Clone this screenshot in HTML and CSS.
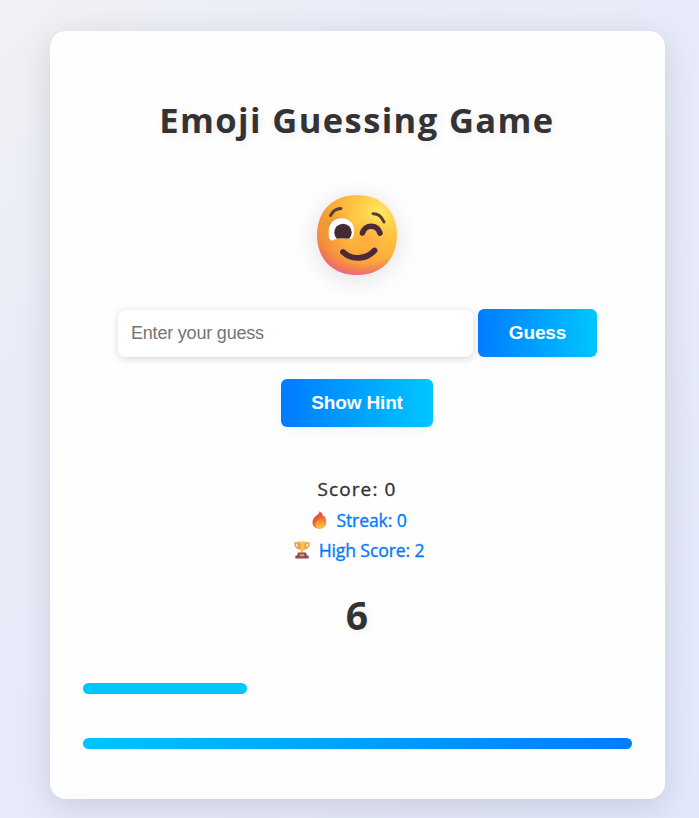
FILE: index.html
```html
<!DOCTYPE html>
<html lang="en">
<head>
<meta charset="utf-8">
<title>Emoji Guessing Game</title>
<link rel="stylesheet" href="styles.css">
</head>
<body>
<main class="card">
  <h1 class="title">Emoji Guessing Game</h1>
  <svg class="emoji" viewBox="0 0 80 80" role="img" aria-label="Winking face">
    <defs>
      <radialGradient id="face" cx="62" cy="18" r="72" gradientUnits="userSpaceOnUse">
        <stop offset="0" stop-color="#ffe965"/><stop offset=".25" stop-color="#ffcf49"/><stop offset=".6" stop-color="#fdb13a"/><stop offset="1" stop-color="#f07f3e"/>
      </radialGradient>
      <radialGradient id="cheek" cx="52" cy="45" r="24" gradientUnits="userSpaceOnUse">
        <stop offset="0" stop-color="#ff9a40" stop-opacity=".6"/><stop offset="1" stop-color="#ffa63f" stop-opacity="0"/>
      </radialGradient>
      <radialGradient id="chin" cx="46" cy="14" r="70" gradientUnits="userSpaceOnUse">
        <stop offset=".78" stop-color="#ee6d5c" stop-opacity="0"/><stop offset="1" stop-color="#e85aae"/>
      </radialGradient>
      <radialGradient id="brow" cx="18" cy="30" r="18" gradientUnits="userSpaceOnUse">
        <stop offset="0" stop-color="#c88a18" stop-opacity=".65"/><stop offset="1" stop-color="#e6a526" stop-opacity="0"/>
      </radialGradient>
      <clipPath id="eye"><path d="M12.500 44C9.500 31 15 23.300 24.500 23.300C34 23.300 38.500 31 36.800 39Q36 44.500 33 43.800Q24 42.800 19 43.800Q15 47 12.500 44Z"/></clipPath>
    </defs>
    <path fill="url(#face)" d="M40 0C63.500 0 80 15.500 80 40C80 64.500 63.500 80 40 80C16.500 80 0 64.500 0 40C0 15.500 16.500 0 40 0Z"/>
    <path fill="url(#cheek)" d="M28 20H78V68H28Z"/>
    <path fill="url(#brow)" d="M2 12H40V50H2Z"/>
    <path fill="url(#chin)" d="M40 0C63.500 0 80 15.500 80 40C80 64.500 63.500 80 40 80C16.500 80 0 64.500 0 40C0 15.500 16.500 0 40 0Z"/>
    <g clip-path="url(#eye)"><path fill="#fff" d="M8 20H40V48H8Z"/><circle cx="26" cy="37.500" r="8.700" fill="#422b34"/></g>
    <g fill="none" stroke="#4a2b3a" stroke-linecap="round">
      <path stroke="#593c33" stroke-width="3" d="M13.500 20.500Q17 13.500 24 13.500"/>
      <path stroke="#593c33" stroke-width="3" d="M56 18.700Q63.500 18.500 67 27"/>
      <path stroke-width="5.600" d="M45.500 38C48 29 60 29 63 38"/>
      <path stroke-width="5.800" d="M26 57C34 65 49 65 57.500 55.500"/>
    </g>
  </svg>
  <form class="guess" onsubmit="return false">
    <input class="field" type="text" placeholder="Enter your guess" aria-label="Enter your guess">
    <button class="button">Guess</button>
  </form>
  <button class="button hint" type="button">Show Hint</button>
  <p class="score">Score: 0</p>
  <p class="stat">
    <svg class="icon flame" viewBox="0 0 15 18" aria-hidden="true">
      <defs><linearGradient id="fire" x2=".7" y2="1"><stop stop-color="#d63f3e"/><stop offset=".55" stop-color="#f1613a"/><stop offset="1" stop-color="#ff9b38"/></linearGradient>
      <linearGradient id="core" y2="1" x2="0"><stop stop-color="#f9733b"/><stop offset="1" stop-color="#ffc62f"/></linearGradient></defs>
      <path fill="url(#fire)" d="M7.200 .3C10 1.500 11 3.500 11 5.500L12 4.500C13.500 6.500 14.500 9 14.200 11.500C14 15.500 11 17.700 7.400 17.700C3.500 17.700 .5 15.500 .5 11.500C.5 9 1.500 7.300 3 5.800C4.500 4 7.500 3.500 7.200 .3Z"/>
      <path fill="url(#core)" d="M8.500 6C8.500 8 12.500 9.500 12.500 13C12.500 16 10 17.500 7.700 17.500C5 17.500 3 15.500 3.500 12.500C4 9.800 7.500 9 8.500 6Z"/>
    </svg>
    <span class="streak">Streak: 0</span>
  </p>
  <p class="stat">
    <svg class="icon cup" viewBox="0 0 16 18" aria-hidden="true">
      <defs><linearGradient id="gold"><stop stop-color="#e38b42"/><stop offset=".55" stop-color="#ffc54c"/><stop offset="1" stop-color="#e99d38"/></linearGradient></defs>
      <path fill="none" stroke="#e7a044" stroke-width="1.400" d="M4 2H1Q.8 7 6 8M12 2H15Q15.200 7 10 8"/>
      <path fill="url(#gold)" d="M3.300 1H12.700C12.700 6 12 8.300 9 9.500V12H7V9.500C4 8.300 3.300 6 3.300 1Z"/>
      <ellipse cx="8" cy="1.200" rx="4.700" ry="1" fill="#f7c95f"/>
      <path fill="#8b4b63" d="M4 11.500H12L13 14.500H14Q14.700 14.500 14.700 15.500V17.500H1.300V15.500Q1.300 14.500 2 14.500H3Z"/>
      <path fill="#e9a265" d="M5.800 13.200H10.200V15.200H5.800Z"/>
    </svg>
    <span class="high">High Score: 2</span>
  </p>
  <p class="timer">6</p>
  <div class="bar remaining"></div>
  <div class="bar progress"></div>
</main>
</body>
</html>
```
FILE: styles.css
```css
* { box-sizing: border-box; }
body {
  margin: 0;
  height: 818px;
  padding: 31px 34px 0 50px;
  overflow: hidden;
  background: linear-gradient(135deg, #f0f1f4 0%, #e9ecf7 25%, #e2e7fb 100%);
  color: #333;
  font-family: "Segoe UI", "Open Sans", "Noto Sans", sans-serif;
}
.card {
  display: flex;
  flex-direction: column;
  align-items: center;
  width: 615px;
  height: 768px;
  padding: 64px 34px 0 33px;
  border-radius: 16px;
  background: #fefefe;
  box-shadow: 0 8px 32px rgba(0, 0, 0, .12);
}
.title {
  margin: 0;
  font-size: 34.500px;
  line-height: 50px;
  letter-spacing: 1.400px;
  white-space: nowrap;
  text-shadow: 2px 2px 8px rgba(0, 0, 0, .08);
}
.emoji {
  width: 80px;
  height: 80px;
  margin-top: 49.500px;
  overflow: visible;
  filter: drop-shadow(0 4px 12px rgba(0, 0, 0, .12));
}
.guess {
  display: flex;
  align-items: flex-end;
  align-self: flex-start;
  gap: 5px;
  margin: 34.500px 0 0 35px;
}
.field {
  width: 355px;
  height: 47px;
  padding: 0 13px;
  border: 0;
  border-radius: 8px;
  background: #fff;
  box-shadow: 0 2px 8px rgba(0, 0, 0, .15);
  font: 18px "Liberation Sans", Arial, sans-serif;
}
.field::placeholder {
  color: #757575;
  letter-spacing: -.2px;
}
.button {
  width: 119px;
  height: 48px;
  padding: 0;
  border: 0;
  border-radius: 6px;
  background: linear-gradient(90deg, #007bff, #00c6ff);
  box-shadow: 0 4px 12px rgba(0, 123, 255, .05);
  color: #fff;
  font: bold 19px "Liberation Sans", Arial, sans-serif;
  letter-spacing: -.15px;
}
.hint { width: 152px; margin-top: 22px; }
.score {
  margin: 47px 0 0;
  font-size: 19px;
  font-weight: 500;
  line-height: 30px;
  letter-spacing: 1.100px;
  -webkit-text-stroke: .35px currentColor;
}
.stat {
  display: flex;
  align-items: center;
  height: 30px;
  margin: 0;
  padding-left: 4px;
  color: #007bff;
  font-size: 17.600px;
  font-weight: 500;
  line-height: 30px;
  letter-spacing: -.12px;
  -webkit-text-stroke: .35px currentColor;
}
.score + .stat { margin-top: 1px; padding-left: 5px; }
.icon {
  flex: none;
  overflow: visible;
  -webkit-text-stroke: 0;
}
.flame { width: 15px; height: 18px; margin-right: 9px; }
.cup { width: 16px; height: 18px; margin-right: 9px; }
.timer {
  margin: 24px 0 0;
  font-size: 39px;
  font-weight: bold;
  line-height: 52px;
  text-shadow: 2px 2px 8px rgba(0, 0, 0, .06);
}
.bar { height: 11px; border-radius: 6px; }
.remaining {
  align-self: flex-start;
  width: 164px;
  margin-top: 42px;
  background: #00c6ff;
}
.progress {
  align-self: flex-start;
  width: 549px;
  margin-top: 44px;
  background: linear-gradient(135deg, #00c6ff, #007bff);
}
```
